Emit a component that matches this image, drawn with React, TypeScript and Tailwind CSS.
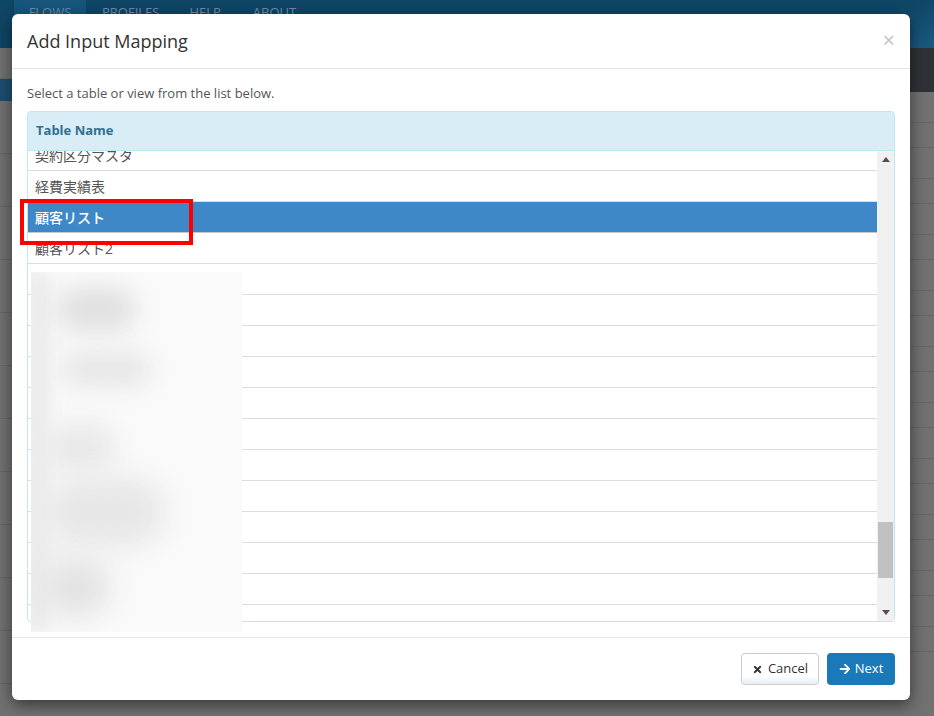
import { FaArrowRight, FaTimes } from "react-icons/fa";

const FONT = '"Open Sans", "Noto Sans CJK JP", sans-serif';

const TABLE_ROWS = [
  "契約区分マスタ",
  "経費実績表",
  "顧客リスト",
  "顧客リスト2",
  "",
  "",
  "",
  "",
  "",
  "",
  "",
  "",
  "",
  "",
  "",
  "",
];
const SELECTED_INDEX = 2;

// 背景の暗くなったアプリ画面
function Backdrop() {
  return (
    <div className="flex h-[716px] w-[934px] flex-col bg-[#717171]">
      {/* ナビバー */}
      <div className="flex h-[48px] shrink-0 items-start bg-[#0f4565] text-[13px] text-[#6f8ba1]">
        <div className="ml-[14px] flex h-full w-[72px] justify-center bg-[#17557a] pt-[3px]">FLOWS</div>
        <div className="ml-[16px] pt-[3px]">PROFILES</div>
        <div className="ml-[30px] pt-[3px]">HELP</div>
        <div className="ml-[32px] pt-[3px]">ABOUT</div>
        <div className="ml-auto h-full w-[120px] bg-[linear-gradient(160deg,#0f4565_40%,#1a5a80)]" />
      </div>

      <div className="flex min-h-0 flex-1 overflow-hidden">
        {/* 左パネル */}
        <div className="flex w-[28px] flex-col">
          <div className="h-[31px] shrink-0 border-b border-[#666]" />
          <div className="h-[22px] shrink-0 bg-[#1c4e70]" />
          {Array.from({ length: 11 }, (_, i) => (
            <div key={i} className="h-[53px] shrink-0 border-b border-[#666]" />
          ))}
        </div>
        <div className="flex-1" />
        {/* 右パネル */}
        <div className="flex w-[60px] flex-col">
          <div className="flex h-[44px] shrink-0 items-center bg-[#2e3236] pl-[7px] text-[13px] text-[#7d7d7d]">t</div>
          {Array.from({ length: 20 }, (_, i) => (
            <div key={i} className={`shrink-0 border-b border-[#666] ${i % 2 ? "h-[25px]" : "h-[31px]"}`} />
          ))}
        </div>
      </div>
    </div>
  );
}

function Scrollbar() {
  return (
    <div className="flex w-[17px] shrink-0 flex-col items-center bg-[#f1f1f1]">
      <div className="flex h-[17px] w-full items-center justify-center">
        <svg width="8" height="5" viewBox="0 0 8 5">
          <path d="M0 5 L4 0 L8 5 Z" fill="#505050" />
        </svg>
      </div>
      <div className="w-full flex-1 px-[1px]">
        <div className="mt-[354px] h-[56px] w-full bg-[#c1c1c1]" />
      </div>
      <div className="flex h-[17px] w-full items-center justify-center">
        <svg width="8" height="5" viewBox="0 0 8 5">
          <path d="M0 0 L4 5 L8 0 Z" fill="#505050" />
        </svg>
      </div>
    </div>
  );
}

// ぼかし部分
function BlurPatch() {
  return (
    <div className="absolute left-[19px] top-[258px] h-[360px] w-[211px] overflow-hidden bg-[#fafafa]">
      <div className="absolute left-[-10px] top-0 h-full w-[30px] bg-[#ececec] blur-[8px]" />
      <div className="absolute left-[25px] top-[15px] h-[45px] w-[80px] rounded-full bg-[#e0e0e0] blur-[12px]" />
      <div className="absolute left-[30px] top-[80px] h-[35px] w-[90px] rounded-full bg-[#e6e6e6] blur-[12px]" />
      <div className="absolute left-[15px] top-[150px] h-[50px] w-[70px] rounded-full bg-[#e9e9e9] blur-[12px]" />
      <div className="absolute left-[15px] top-[205px] h-[70px] w-[120px] rounded-full bg-[#e7e7e7] blur-[14px]" />
      <div className="absolute left-[10px] top-[285px] h-[60px] w-[70px] rounded-full bg-[#e3e3e3] blur-[14px]" />
    </div>
  );
}

function Modal() {
  return (
    <div className="absolute left-[12px] top-[14px] flex h-[686px] w-[898px] flex-col rounded-[6px] bg-white shadow-[0_5px_15px_rgba(0,0,0,0.5)]">
      {/* ヘッダー */}
      <div className="flex h-[55px] shrink-0 items-center justify-between border-b border-[#e5e5e5] px-[15px]">
        <h4 className="text-[18px] text-[#333]">Add Input Mapping</h4>
        <span className="mb-[4px] text-[22px] leading-none text-[#c4c4c4]">×</span>
      </div>

      {/* 本文 */}
      <div className="flex min-h-0 flex-1 flex-col px-[15px] pb-[15px] pt-[15px]">
        <p className="mb-[9px] shrink-0 text-[13px] leading-[18px] text-[#555]">
          Select a table or view from the list below.
        </p>
        <div className="flex min-h-0 flex-1 flex-col overflow-hidden rounded-[4px] border border-[#bce8f1]">
          <div className="flex h-[39px] shrink-0 items-center border-b border-[#bce8f1] bg-[#d9edf7] px-[8px]">
            <span className="text-[13px] font-bold text-[#31708f]">Table Name</span>
          </div>
          <div className="flex min-h-0 flex-1 overflow-hidden">
            <div className="min-h-0 flex-1 overflow-hidden">
              <div className="-mt-[11px]">
                {TABLE_ROWS.map((name, i) => (
                  <div
                    key={i}
                    className={`flex h-[31px] items-center border-b px-[7px] text-[14px] ${
                      i === SELECTED_INDEX
                        ? "border-[#c8c8c8] bg-[#3f88c8] font-medium text-white"
                        : "border-[#dddddd] text-[#555]"
                    }`}
                  >
                    {name}
                  </div>
                ))}
              </div>
            </div>
            <Scrollbar />
          </div>
        </div>
      </div>

      {/* フッター */}
      <div className="flex h-[63px] shrink-0 items-center justify-end gap-[8px] border-t border-[#e5e5e5] px-[15px]">
        <button
          type="button"
          className="flex h-[32px] w-[78px] items-center justify-center gap-[5px] rounded-[4px] border border-[#ccc] bg-[linear-gradient(#fff_75%,#e3eef4)] text-[13px] text-[#333]"
        >
          <FaTimes size={11} />
          Cancel
        </button>
        <button
          type="button"
          className="flex h-[32px] w-[68px] items-center justify-center gap-[4px] rounded-[4px] bg-[#1a79b8] text-[13px] text-white"
        >
          <FaArrowRight size={12} />
          Next
        </button>
      </div>

      <BlurPatch />

      {/* 赤枠 */}
      <div className="absolute left-[8px] top-[185px] h-[46px] w-[173px] border-[4px] border-[#ff0000]" />
    </div>
  );
}

export default function App() {
  return (
    <div className="relative h-[716px] w-[934px] overflow-hidden" style={{ fontFamily: FONT }}>
      <Backdrop />
      <Modal />
    </div>
  );
}
